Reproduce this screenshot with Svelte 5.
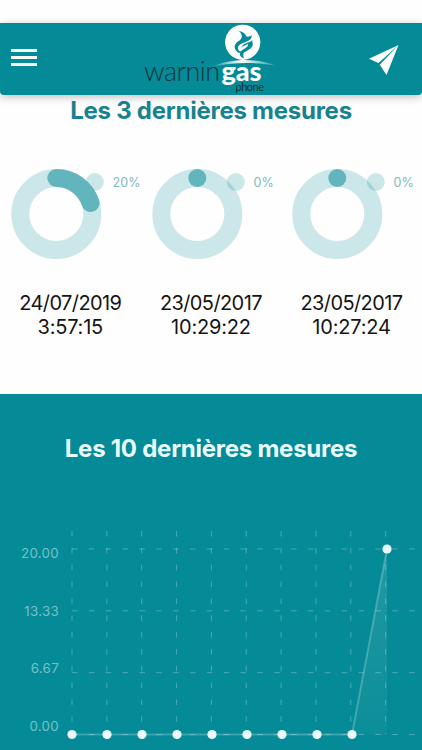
<script lang="ts">
  interface Measure {
    value: number;
    date: string;
    time: string;
  }

  const latest: Measure[] = [
    { value: 20, date: "24/07/2019", time: "3:57:15" },
    { value: 0, date: "23/05/2017", time: "10:29:22" },
    { value: 0, date: "23/05/2017", time: "10:27:24" },
  ];

  const history = [0, 0, 0, 0, 0, 0, 0, 0, 0, 20];
  const labels = ["20.00", "13.33", "6.67", "0.00"];

  const radius = 36;
  const circumference = 2 * Math.PI * radius;

  // chart geometry
  const left = 72;
  const step = 35;
  const top = 29;
  const bottom = 214.5;
  const rows = labels.map((_, i) => top + (i * (bottom - top)) / 3);

  const points = history.map((v, i) => ({
    x: left + i * step,
    y: bottom - (v / 20) * (bottom - top),
  }));
  const line = points.map((p) => `${p.x},${p.y}`).join(" ");
  const area = `${left},${bottom} ${line} ${points[points.length - 1].x},${bottom}`;

  // a zero value still draws the round cap
  function arc(value: number) {
    return `${Math.max((value / 100) * circumference, 0.01)} ${circumference}`;
  }
</script>

<div class="screen">
  <header>
    <button class="menu" aria-label="Menu">
      <span></span>
      <span></span>
      <span></span>
    </button>

    <svg class="logo" width="140" height="72" viewBox="0 0 140 72">
      <defs>
        <linearGradient id="swoosh">
          <stop offset="0" stop-color="#fff" stop-opacity="0.1" />
          <stop offset="0.45" stop-color="#fff" />
          <stop offset="1" stop-color="#fff" stop-opacity="0.1" />
        </linearGradient>
      </defs>
      <circle cx="101.7" cy="19.3" r="17.6" fill="#fff" />
      <g transform="translate(-6 -8) scale(0.33333)" fill="#048b97">
        <path d="M311 47C323 51 333 55 333 64C339 67 345 65 351 61C350 72 343 77 334 80C320 85 307 90 309 101C310 107 315 111 320 107C320 115 310 116 304 108C295 96 299 86 311 78C322 71 325 60 311 47Z" />
        <path d="M352 74C350 80 357 86 351 95C346 104 334 107 328 112C323 117 324 124 328 130C313 127 311 115 321 106C331 98 341 96 339 87C333 91 326 92 319 97C323 88 333 85 341 82C347 80 350 77 352 74Z" />
      </g>
      <path d="M72 43.5C88 35.500 117 34.500 136 43C115 38.500 90 39.500 72 43.500Z" fill="url(#swoosh)" />
      <text class="warnin" x="3" y="57.500" textLength="76">warnin</text>
      <text class="gas" x="80.500" y="57.500" textLength="40">gas</text>
      <text class="phone" x="94.500" y="68" textLength="28.500">phone</text>
    </svg>

    <button class="send" aria-label="Envoyer">
      <svg width="32" height="32" viewBox="0 0 32 32">
        <path d="M30.500 1L1 14.800L10.500 19Z M30.500 1L11.800 20.800L18.500 31Z" fill="#fff" />
      </svg>
    </button>
  </header>

  <main>
    <section class="latest">
      <h2>Les 3 dernières mesures</h2>
      <div class="rings">
        {#each latest as m}
          <div class="measure">
            <svg width="140" height="92" viewBox="0 0 140 92">
              <circle class="track" cx="56.300" cy="46" r={radius} />
              <circle class="legend" cx="94.800" cy="14" r="9" />
              <circle
                class="value"
                cx="56.300"
                cy="46"
                r={radius}
                stroke-dasharray={arc(m.value)}
                transform="rotate(-90 56.300 46)"
              />
              <text x="112.500" y="18.700">{m.value}%</text>
            </svg>
            <p><span class="date">{m.date}</span><br />{m.time}</p>
          </div>
        {/each}
      </div>
    </section>

    <section class="history">
      <h2>Les 10 dernières mesures</h2>
      <svg width="422" height="230" viewBox="0 0 422 230">
        <defs>
          <linearGradient id="fill" x1="0" y1="0" x2="0" y2="1">
            <stop offset="0" stop-color="#fff" stop-opacity="0.12" />
            <stop offset="1" stop-color="#fff" stop-opacity="0.03" />
          </linearGradient>
        </defs>
        <g class="grid">
          {#each rows as y}
            <line x1={left} y1={y} x2="422" y2={y} />
          {/each}
          {#each history as _, i}
            <line x1={left + i * 34.85} y1="11" x2={left + i * 34.85} y2={bottom} />
          {/each}
        </g>
        <g class="labels">
          {#each labels as label, i}
            <text x="59" y={38.300 + i * 57.400}>{label}</text>
          {/each}
        </g>
        <polygon points={area} fill="url(#fill)" />
        <polyline points={line} />
        {#each points as p}
          <circle cx={p.x} cy={p.y} r="4.600" fill="#eafafb" />
        {/each}
      </svg>
    </section>
  </main>
</div>

<style>
  .screen {
    width: 422px;
    height: 750px;
    padding-top: 23px;
    box-sizing: border-box;
    overflow: hidden;
    background: #fefefe;
    font-family: Inter, "Liberation Sans", sans-serif;
  }

  header {
    position: relative;
    z-index: 1;
    display: flex;
    align-items: flex-start;
    height: 72px;
    background: #048b97;
    border-radius: 0 0 4px 4px;
    box-shadow: 0 2px 8px rgba(0, 0, 0, 0.25);
  }

  button {
    border: none;
    background: none;
    padding: 0;
  }

  .menu {
    display: flex;
    flex-direction: column;
    gap: 4px;
    width: 26px;
    margin: 26px 0 0 11px;
  }

  .menu span {
    height: 3px;
    background: #f4fcfc;
  }

  .logo {
    margin-left: 104px;
  }

  .logo text {
    font-family: Lato, sans-serif;
    fill: #10333a;
  }

  .logo .warnin {
    font-size: 27px;
    font-weight: 300;
  }

  .logo .gas {
    font-size: 27px;
    font-weight: 900;
    fill: #fff;
  }

  .logo .phone {
    font-size: 11px;
  }

  .send {
    height: 32px;
    margin: 21px 22px 0 auto;
  }

  h2 {
    margin: 0;
    text-align: center;
    font-size: 24px;
    line-height: 30px;
    font-weight: 700;
    letter-spacing: -0.25px;
    white-space: nowrap;
  }

  .latest {
    height: 299px;
    padding-top: 1px;
    box-sizing: border-box;
    color: #17838e;
  }

  .rings {
    display: grid;
    grid-template-columns: repeat(3, 140.6px);
    margin-top: 42px;
  }

  .measure svg {
    display: block;
    font-size: 12.5px;
  }

  .measure text {
    fill: #7db9c1;
    letter-spacing: 0.1px;
  }

  .track {
    fill: none;
    stroke: #048b97;
    stroke-opacity: 0.2;
    stroke-width: 18;
  }

  .legend {
    fill: #048b97;
    fill-opacity: 0.2;
  }

  .value {
    fill: none;
    stroke: #62b5bd;
    stroke-width: 18;
    stroke-linecap: round;
  }

  .measure p {
    margin: 31px 0 0;
    text-align: center;
    font-size: 20px;
    line-height: 24px;
    letter-spacing: -0.2px;
    color: #151515;
  }

  .measure .date {
    letter-spacing: -0.6px;
  }

  .history {
    height: 356px;
    padding-top: 40px;
    box-sizing: border-box;
    background: #048b97;
    color: #eafafb;
  }

  .history svg {
    display: block;
    margin-top: 56px;
  }

  .grid line {
    stroke: #fff;
    stroke-opacity: 0.27;
    stroke-dasharray: 5.6 11.25;
  }

  .labels text {
    font-size: 13.3px;
    letter-spacing: 0.3px;
    text-anchor: end;
    fill: #79c0c7;
  }

  polyline {
    fill: none;
    stroke: #fff;
    stroke-opacity: 0.22;
    stroke-width: 2;
  }
</style>
